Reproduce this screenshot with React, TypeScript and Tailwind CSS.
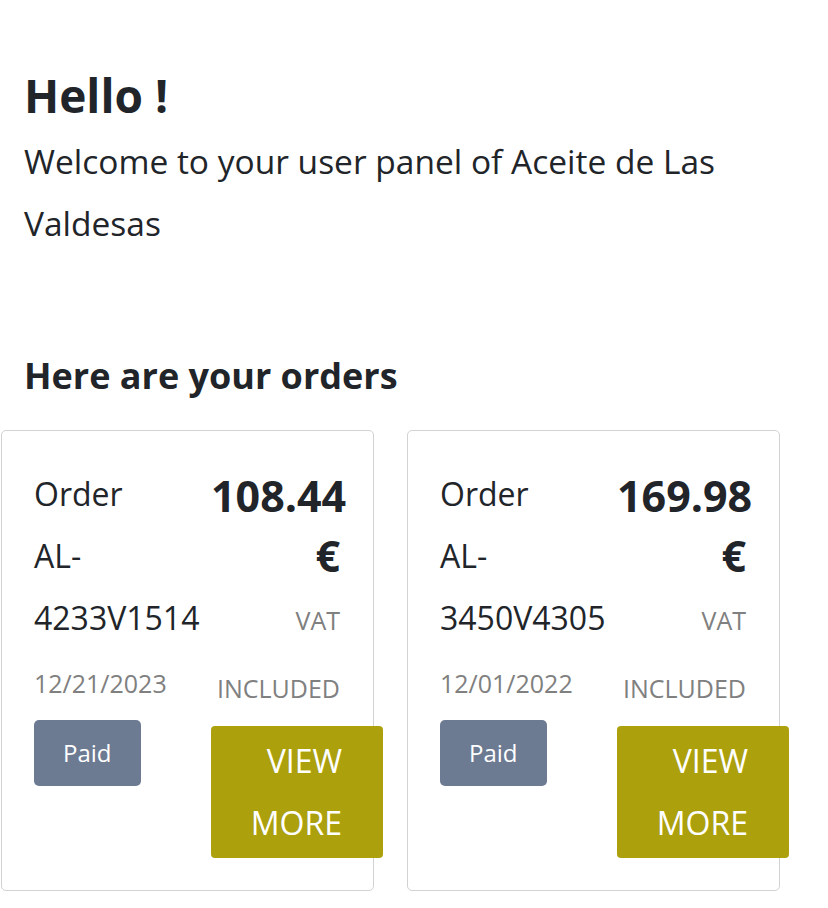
const orders = [
  { id: "AL-4233V1514", date: "12/21/2023", total: "108.44", status: "Paid" },
  { id: "AL-3450V4305", date: "12/01/2022", total: "169.98", status: "Paid" },
];

type Order = (typeof orders)[number];

const OrderCard = ({ order }: { order: Order }) => {
  return (
    <div className="w-[373px] shrink-0 rounded-[5px] border border-[#d2d2d2] bg-white pl-[32px] pr-[33px] pt-[32px] pb-[32px]">
      <div className="flex justify-between w-[306px]">
        {/* Left column */}
        <div className="w-[141px]">
          <div className="text-[32px] leading-[62px] text-[#212529]">Order {order.id}</div>
          <div className="mt-[14px] text-[25px] leading-[40px] text-[#808080]">{order.date}</div>
          <span className="mt-[17px] inline-block rounded-[5px] bg-[#6c7a92] px-[29px] py-[15px] text-[24px] leading-[36px] text-white">
            {order.status}
          </span>
        </div>
        {/* Right column */}
        <div className="w-[129px] text-right mt-[3px]">
          <div className="text-[43px] font-bold leading-[60px] text-[#212529]">{order.total} €</div>
          <div className="text-[25px] uppercase leading-[68px] text-[#808080]">VAT included</div>
          <button className="mt-[4px] w-[172px] rounded-[4px] bg-[#aca00d] pl-[30px] pr-[41px] py-[4px] text-right text-[32px] uppercase leading-[62px] text-white">
            View more
          </button>
        </div>
      </div>
    </div>
  );
};

export default function App() {
  return (
    <div className="min-h-screen bg-white font-['Open_Sans',sans-serif] text-[#212529]">
      <div className="px-[24px] pt-[65px]">
        <h1 className="text-[46px] font-bold leading-[60px]">Hello !</h1>
        <p className="mt-[5px] text-[33.5px] leading-[62px]">Welcome to your user panel of Aceite de Las Valdesas</p>
        <h2 className="mt-[100px] text-[36px] font-bold leading-[44px]">Here are your orders</h2>
      </div>
      <div className="mt-[32px] flex gap-[33px] pl-[1px]">
        {orders.map((o) => (
          <OrderCard key={o.id} order={o} />
        ))}
      </div>
    </div>
  );
}
